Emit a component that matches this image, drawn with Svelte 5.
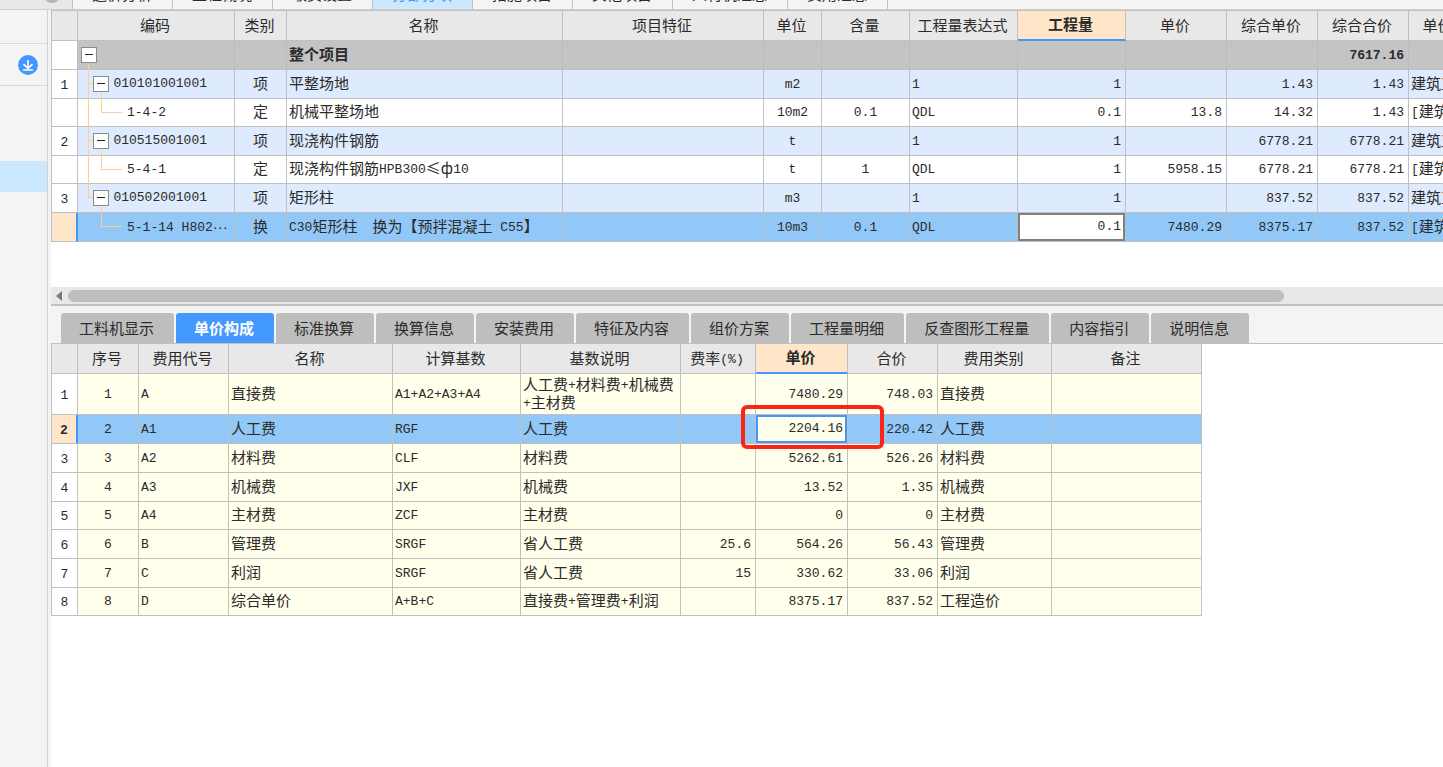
<script lang="ts">
	type Kind = 'root' | 'item' | 'leaf';

	interface BillRow {
		kind: Kind;
		no?: string;
		code?: string;
		type?: string;
		name: string;
		unit?: string;
		content?: string;
		expr?: string;
		qty?: string;
		price?: string;
		unitTotal?: string;
		total: string;
		file?: string;
		last?: boolean;
		selected?: boolean;
	}

	const moduleTabs = ['造价分析', '工程概况', '取费设置', '分部分项', '措施项目', '其他项目', '人材机汇总', '费用汇总'];

	const billCols = [
		{ label: '', w: 27 },
		{ label: '编码', w: 157 },
		{ label: '类别', w: 52 },
		{ label: '名称', w: 276 },
		{ label: '项目特征', w: 201 },
		{ label: '单位', w: 58 },
		{ label: '含量', w: 88 },
		{ label: '工程量表达式', w: 108 },
		{ label: '工程量', w: 108, active: true },
		{ label: '单价', w: 101 },
		{ label: '综合单价', w: 91 },
		{ label: '综合合价', w: 91 },
		{ label: '单价构成文件', w: 120 }
	];

	const bill: BillRow[] = [
		{ kind: 'root', name: '整个项目', total: '7617.16' },
		{ kind: 'item', no: '1', code: '010101001001', type: '项', name: '平整场地', unit: 'm2', expr: '1', qty: '1', unitTotal: '1.43', total: '1.43', file: '建筑工程' },
		{ kind: 'leaf', code: '1-4-2', type: '定', name: '机械平整场地', unit: '10m2', content: '0.1', expr: 'QDL', qty: '0.1', price: '13.8', unitTotal: '14.32', total: '1.43', file: '[建筑工程]' },
		{ kind: 'item', no: '2', code: '010515001001', type: '项', name: '现浇构件钢筋', unit: 't', expr: '1', qty: '1', unitTotal: '6778.21', total: '6778.21', file: '建筑工程' },
		{ kind: 'leaf', code: '5-4-1', type: '定', name: '现浇构件钢筋HPB300≤ф10', unit: 't', content: '1', expr: 'QDL', qty: '1', price: '5958.15', unitTotal: '6778.21', total: '6778.21', file: '[建筑工程]' },
		{ kind: 'item', no: '3', code: '010502001001', type: '项', name: '矩形柱', unit: 'm3', expr: '1', qty: '1', unitTotal: '837.52', total: '837.52', file: '建筑工程', last: true },
		{ kind: 'leaf', code: '5-1-14 H802···', type: '换', name: 'C30矩形柱　换为【预拌混凝土 C55】', unit: '10m3', content: '0.1', expr: 'QDL', qty: '0.1', price: '7480.29', unitTotal: '8375.17', total: '837.52', file: '[建筑工程]', last: true, selected: true }
	];

	const detailTabs = ['工料机显示', '单价构成', '标准换算', '换算信息', '安装费用', '特征及内容', '组价方案', '工程量明细', '反查图形工程量', '内容指引', '说明信息'];

	const feeCols = [
		{ label: '', w: 27 },
		{ label: '序号', w: 61 },
		{ label: '费用代号', w: 90 },
		{ label: '名称', w: 164 },
		{ label: '计算基数', w: 128 },
		{ label: '基数说明', w: 160 },
		{ label: '费率(%)', w: 75 },
		{ label: '单价', w: 92, active: true },
		{ label: '合价', w: 90 },
		{ label: '费用类别', w: 114 },
		{ label: '备注', w: 150 }
	];

	// code, name, base, base note, rate, price, total, category
	const fees = [
		['A', '直接费', 'A1+A2+A3+A4', '人工费+材料费+机械费+主材费', '', '7480.29', '748.03', '直接费'],
		['A1', '人工费', 'RGF', '人工费', '', '2204.16', '220.42', '人工费'],
		['A2', '材料费', 'CLF', '材料费', '', '5262.61', '526.26', '材料费'],
		['A3', '机械费', 'JXF', '机械费', '', '13.52', '1.35', '机械费'],
		['A4', '主材费', 'ZCF', '主材费', '', '0', '0', '主材费'],
		['B', '管理费', 'SRGF', '省人工费', '25.6', '564.26', '56.43', '管理费'],
		['C', '利润', 'SRGF', '省人工费', '15', '330.62', '33.06', '利润'],
		['D', '综合单价', 'A+B+C', '直接费+管理费+利润', '', '8375.17', '837.52', '工程造价']
	];
	const feeSelected = 1;

	// Latin runs are set in the half-width face, everything else in the CJK one
	const runs = (s = '') => s.split(/([\x20-\x7e]+|·+)/).filter(Boolean);
	const isLatin = (s: string) => /^[\x20-\x7e]/.test(s);
</script>

{#snippet mixed(s: string | undefined)}{#each runs(s) as run}{#if isLatin(run)}<span class="latin">{run}</span>{:else if run[0] === '·'}<span class="dots">{run}</span>{:else}{run}{/if}{/each}{/snippet}

<div class="app">
	<nav class="module-bar">
		<span class="knob"></span>
		{#each moduleTabs as tab, i}
			<button class="module-tab" class:active={i === 3}>{tab}</button>
		{/each}
	</nav>

	<div class="body">
		<aside class="side">
			<div class="side-head"></div>
			<div class="side-tool">
				<button class="download" aria-label="下载">
					<svg width="20" height="20" viewBox="0 0 20 20">
						<circle cx="10" cy="10" r="10" fill="#4297fd" />
						<path d="M10 5v8M5.5 9.2l4.5 4.2 4.5-4.2M5 15h10" fill="none" stroke="#fff" stroke-width="1.6" />
					</svg>
				</button>
			</div>
			<div class="side-current"></div>
		</aside>

		<main class="main">
			<section class="bill">
				<table class="grid" style:width="{billCols.reduce((a, c) => a + c.w, 0)}px">
					<colgroup>
						{#each billCols as c}<col style:width="{c.w}px" />{/each}
					</colgroup>
					<thead>
						<tr>
							{#each billCols as c}<th class:active={c.active}>{c.label}</th>{/each}
						</tr>
					</thead>
					<tbody>
						{#each bill as row}
							<tr class={row.kind} class:selected={row.selected}>
								<td class="rowno">{@render mixed(row.no)}</td>
								<td class="code">
									{#if row.kind === 'leaf'}
										{#if !row.last}<span class="trunk"></span>{/if}
										<span class="elbow"></span>
									{:else}
										{#if row.kind === 'item'}
											<span class="trunk" class:half={row.last}></span>
											<span class="twig"></span>
										{/if}
										<button class="toggle" aria-label="折叠"></button>
									{/if}
									{@render mixed(row.code)}
								</td>
								<td class="mid">{row.type ?? ''}</td>
								<td>{@render mixed(row.name)}</td>
								<td></td>
								<td class="mid">{@render mixed(row.unit)}</td>
								<td class="mid">{@render mixed(row.content)}</td>
								<td>{@render mixed(row.expr)}</td>
								{#if row.selected}
									<td class="edit"><input class="qty" aria-label="工程量" value={row.qty} /></td>
								{:else}
									<td class="num">{@render mixed(row.qty)}</td>
								{/if}
								<td class="num">{@render mixed(row.price)}</td>
								<td class="num">{@render mixed(row.unitTotal)}</td>
								<td class="num">{@render mixed(row.total)}</td>
								<td>{@render mixed(row.file)}</td>
							</tr>
						{/each}
					</tbody>
				</table>
			</section>

			<div class="scrollbar">
				<button class="scroll-left" aria-label="向左滚动">
					<svg width="6" height="10" viewBox="0 0 6 10"><path d="M6 0v10L0 5z" fill="#777780" /></svg>
				</button>
				<div class="track"><div class="thumb"></div></div>
			</div>

			<nav class="detail-tabs">
				{#each detailTabs as tab, i}
					<button class="detail-tab" class:active={i === 1}>{tab}</button>
				{/each}
			</nav>

			<section class="fees">
				<table class="grid" style:width="{feeCols.reduce((a, c) => a + c.w, 0)}px">
					<colgroup>
						{#each feeCols as c}<col style:width="{c.w}px" />{/each}
					</colgroup>
					<thead>
						<tr>
							{#each feeCols as c}<th class:active={c.active}>{@render mixed(c.label)}</th>{/each}
						</tr>
					</thead>
					<tbody>
						{#each fees as [code, name, base, note, rate, price, total, category], i}
							<tr class:selected={i === feeSelected}>
								<td class="rowno">{@render mixed(String(i + 1))}</td>
								<td class="mid">{@render mixed(String(i + 1))}</td>
								<td>{@render mixed(code)}</td>
								<td>{name}</td>
								<td>{@render mixed(base)}</td>
								<td>{@render mixed(note)}</td>
								<td class="num">{@render mixed(rate)}</td>
								{#if i === feeSelected}
									<td class="edit">
										<input class="price" aria-label="单价" value={price} />
										<span class="callout"></span>
									</td>
								{:else}
									<td class="num">{@render mixed(price)}</td>
								{/if}
								<td class="num">{@render mixed(total)}</td>
								<td>{category}</td>
								<td></td>
							</tr>
						{/each}
					</tbody>
				</table>
			</section>
		</main>
	</div>
</div>

<style>
	:global(body) {
		margin: 0;
		overflow: hidden;
		background: #fff;
	}

	.app {
		--line: #c0c0c0;
		--blue: #4297fd;
		--peach: #ffe6c8;
		display: flex;
		flex-direction: column;
		min-height: 100vh;
		font: 15px/18px 'Noto Sans CJK SC', sans-serif;
		color: #2b2b2b;
	}

	.app *,
	.app *::before {
		box-sizing: border-box;
	}

	button {
		margin: 0;
		padding: 0;
		border: 0;
		background: none;
		font: inherit;
		color: inherit;
	}

	.latin,
	input {
		font-family: 'Liberation Mono', monospace;
		font-size: 13px;
	}

	.latin {
		line-height: 1;
		vertical-align: 1px;
	}

	.dots {
		font-family: 'Liberation Sans', sans-serif;
		line-height: 1;
	}

	/* module tabs, scrolled almost out of view */
	.module-bar {
		display: flex;
		align-items: flex-end;
		height: 10px;
		overflow: hidden;
		background: #f4f4f4;
		border-bottom: 1px solid #d0d0d0;
	}

	.knob {
		flex: 0 0 73px;
		height: 30px;
		background: #e8e8e8;
		border-right: 1px solid var(--line);
		display: flex;
		align-items: flex-end;
		justify-content: flex-end;
		padding: 0 12px 6px;
	}

	.knob::before {
		content: '';
		width: 16px;
		height: 16px;
		border-radius: 50%;
		background: #b4b4b4;
	}

	.module-tab {
		flex: none;
		height: 30px;
		padding: 0 20px 0 19px;
		border-right: 1px solid var(--line);
	}

	.module-tab.active {
		background: #cce8ff;
		color: var(--blue);
	}

	.body {
		display: flex;
		flex: 1;
	}

	.side {
		flex: 0 0 48px;
		background: #f4f4f4;
		border-right: 1px solid #d0d0d0;
	}

	.side-head {
		height: 34px;
		border-bottom: 1px solid #d8d8d8;
	}

	.side-tool {
		display: flex;
		align-items: center;
		justify-content: flex-end;
		height: 42px;
		padding-right: 9px;
		border-bottom: 1px solid #d8d8d8;
	}

	.download {
		display: flex;
	}

	.side-current {
		height: 31px;
		margin-top: 75px;
		background: #cce8ff;
	}

	.main {
		flex: 1;
		min-width: 0;
		padding-left: 3px;
		background: linear-gradient(90deg, #f4f4f4 3px, #fff 3px);
	}

	.bill {
		overflow: hidden;
		padding-bottom: 45px;
	}

	.grid {
		table-layout: fixed;
		border-collapse: separate;
		border-spacing: 0;
	}

	.grid th {
		height: 30px;
		padding: 0 2px 2px 0;
		background: #e8e8e8;
		border-right: 1px solid var(--line);
		border-bottom: 1px solid var(--line);
		font-weight: 400;
		text-align: center;
		white-space: nowrap;
	}

	.grid th:first-child,
	.grid td:first-child {
		border-left: 1px solid var(--line);
	}

	.grid th.active {
		background: var(--peach);
		border-bottom: 2px solid var(--blue);
		font-weight: 700;
	}

	.grid td {
		position: relative;
		height: 29px;
		padding: 0 2px 3px;
		border-right: 1px solid var(--line);
		border-bottom: 1px solid var(--line);
	}

	.bill th {
		height: 31px;
		border-top: 1px solid var(--line);
	}

	.bill td {
		white-space: nowrap;
	}

	.bill .leaf td {
		height: 28px;
	}

	.grid td.mid {
		text-align: center;
	}

	.grid td.num {
		padding-right: 4px;
		text-align: right;
	}

	.grid td.edit {
		padding: 0;
	}

	.root td {
		background: #c4c4c4;
		border-right-color: #bcbcbc;
		font-weight: 700;
	}

	.item td {
		background: #deeafe;
	}

	.fees td {
		background: #ffffec;
	}

	.fees tbody tr:first-child td {
		height: 41px;
	}

	.fees tbody tr:nth-child(3n + 5) td {
		height: 28px;
	}

	.grid .selected td {
		background: #92c8f7;
	}

	.grid td.rowno {
		padding: 0 0 1px;
		background: #fff;
		text-align: center;
	}

	.grid .selected td.rowno {
		background: var(--peach);
		border-right: 2px solid var(--blue);
		font-weight: 700;
	}

	/* tree column */
	.root .code {
		padding-left: 3px;
	}

	.item .code {
		padding-left: 15px;
	}

	.leaf .code {
		padding-left: 49px;
	}

	.toggle {
		position: relative;
		display: inline-flex;
		align-items: center;
		justify-content: center;
		width: 16px;
		height: 16px;
		margin-right: 1px;
		background: #fff;
		border: 1px solid #8c8c8c;
		vertical-align: middle;
	}

	.toggle::before {
		content: '';
		width: 8px;
		height: 1px;
		background: #222;
	}

	.trunk,
	.elbow,
	.twig {
		position: absolute;
		border: 0 solid #ffcf8c;
	}

	.trunk {
		left: 10px;
		top: -6px;
		bottom: -1px;
		border-left-width: 1px;
	}

	.trunk.half {
		bottom: 14px;
	}

	.twig {
		left: 10px;
		top: 13px;
		width: 5px;
		border-top-width: 1px;
	}

	.elbow {
		left: 23px;
		top: -6px;
		width: 21px;
		height: 20px;
		border-left-width: 1px;
		border-bottom-width: 1px;
	}

	/* in-place editors */
	input {
		display: block;
		width: 100%;
		height: 28px;
		margin: 0;
		padding: 0 2px 2px;
		border-radius: 0;
		outline: none;
		color: inherit;
		text-align: right;
	}

	.qty {
		border: 2px solid #808080;
		background: #fff;
	}

	.price {
		border: 2px solid var(--blue);
		background: #ffffec;
	}

	.callout {
		position: absolute;
		z-index: 1;
		top: -10px;
		right: -37px;
		bottom: -6px;
		left: -15px;
		border: 4px solid #fb2517;
		border-radius: 6px;
		pointer-events: none;
	}

	.scrollbar {
		display: flex;
		align-items: center;
		height: 17px;
		background: #e8e8e8;
	}

	.scroll-left {
		display: flex;
		flex: 0 0 17px;
		padding-left: 5px;
	}

	.track {
		flex: 1;
		padding-right: 159px;
	}

	.thumb {
		height: 12px;
		border-radius: 6px;
		background: #bebebe;
	}

	.detail-tabs {
		display: flex;
		align-items: flex-end;
		gap: 2px;
		height: 40px;
		padding-left: 10px;
		background: #f4f4f4;
		border-top: 2px solid var(--line);
		border-bottom: 1px solid var(--line);
	}

	.detail-tab {
		flex: none;
		height: 30px;
		padding: 0 20px 0 18px;
		background: #bebebe;
		border-radius: 3px 3px 0 0;
		white-space: nowrap;
	}

	.detail-tab.active {
		background: #4499fe;
		color: #fff;
		font-weight: 700;
	}
</style>
